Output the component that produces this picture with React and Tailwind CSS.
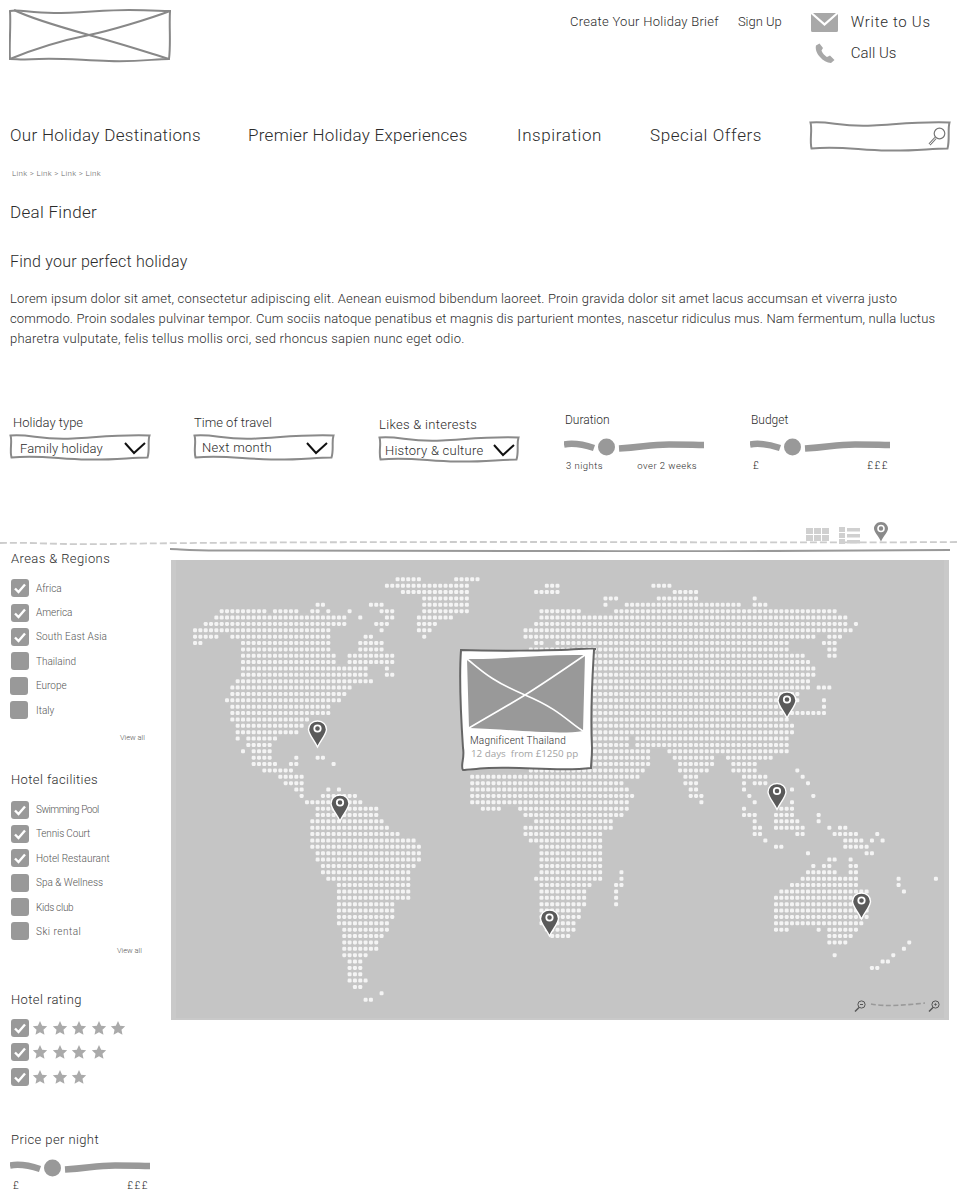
import React from "react";

const R = {
"-37":[[395,420],[453,480]],"-36":[[385,403],[410,470],[548,557],[655,668]],"-35":[[385,385],[400,470],[537,557],[675,695]],
"-34":[[421,470],[607,617],[658,695],[755,755]],"-33":[[317,325],[370,383],[421,470],[607,607],[628,637],[643,738],[755,768]],
"-32":[[222,265],[275,298],[310,320],[328,328],[348,348],[380,393],[421,467],[543,578],[617,625],[633,833]],
"-31":[[215,347],[360,360],[385,393],[417,450],[538,583],[590,848]],
"-30":[[205,345],[375,387],[417,435],[533,578],[585,848],[857,857]],
"-29":[[195,330],[380,380],[417,430],[523,547],[553,853]],
"-28":[[195,218],[232,330],[365,372],[423,423],[523,547],[553,813],[828,842]],
"-27":[[195,202],[242,330],[358,383],[533,542],[558,790],[825,837]],
"-26":[[242,330],[358,383],[530,790],[830,837]],
"-25":[[242,335],[347,393],[530,802],[830,837]],
"-24":[[242,335],[347,393],[530,810]],
"-23":[[242,367],[387,387],[530,815]],
"-22":[[242,367],[387,393],[530,815]],
"-21":[[237,372],[530,807]],
"-20":[[232,350],[530,807],[818,828]],
"-19":[[232,345],[530,797]],
"-18":[[227,340],[530,797],[825,825]],
"-17":[[232,330],[530,790],[825,825]],
"-16":[[232,330],[530,807],[813,827]],
"-15":[[232,308],[530,790]],
"-14":[[237,303],[530,623],[628,793]],
"-13":[[237,298],[530,617],[622,793]],
"-12":[[237,237],[247,277],[530,625],[638,787]],
"-11":[[247,272],[530,627],[638,790]],
"-10":[[243,243],[253,272],[530,647],[670,787],[795,795]],
"-9":[[253,272],[295,295],[317,325],[530,647],[675,715],[727,773]],
"-8":[[253,277],[290,297],[333,333],[530,647],[680,715],[733,758]],
"-7":[[263,293],[530,642],[680,705],[733,758],[798,798]],
"-6":[[277,303],[470,637],[685,698],[745,767],[803,803]],
"-5":[[285,303],[470,620],[685,698],[745,745],[755,767],[808,808]],
"-4":[[295,303],[327,327],[338,338],[470,630],[692,698],[745,745],[762,762],[793,793],[805,805]],
"-3":[[302,303],[322,355],[470,632],[692,700],[750,750],[810,813]],
"-2":[[305,328],[350,362],[473,625],[703,703],[752,757],[793,793]],
"-1":[[315,378],[480,502],[518,625],[745,745],[757,757],[782,793]],
"0":[[315,378],[527,620],[745,757],[777,793],[818,818]],
"1":[[310,383],[533,613],[752,757],[777,798],[818,818]],
"2":[[310,387],[527,610],[755,762],[777,793],[798,803],[830,830],[840,847]],
"3":[[310,398],[527,603],[755,762],[798,803],[835,857],[878,878]],
"4":[[310,413],[532,600],[767,767],[845,862],[872,872],[882,882]],
"5":[[310,420],[538,600],[777,782],[845,867]],
"6":[[315,420],[538,600],[808,808],[867,873]],
"7":[[315,418],[538,603],[830,837],[852,852]],
"8":[[322,413],[538,603],[815,815],[825,830],[852,857]],
"9":[[322,408],[538,603],[623,623],[808,837],[852,857]],
"10":[[327,408],[533,603],[618,623],[803,857],[898,898],[935,935]],
"11":[[338,408],[538,592],[613,623],[793,857],[898,898]],
"12":[[338,408],[538,587],[613,618],[782,870],[903,903]],
"13":[[338,408],[543,587],[613,618],[777,870]],
"14":[[338,392],[543,587],[613,618],[777,868]],
"15":[[338,392],[543,582],[777,868]],
"16":[[338,392],[543,582],[777,868]],
"17":[[338,387],[543,575],[777,863]],
"18":[[343,387],[548,572],[777,788],[820,820],[830,857]],
"19":[[343,382],[550,567],[830,852]],
"20":[[343,377],[830,847],[910,910]],
"21":[[343,377],[903,903]],
"22":[[343,367],[835,835],[893,893]],
"23":[[348,360],[883,888]],
"24":[[348,360],[873,877]],
"25":[[348,360]],
"26":[[348,365]],
"27":[[353,360]],
"28":[[358,358],[380,380]],
"29":[[363,370]],
};

const DOTS = [];
Object.entries(R).forEach(([k, runs]) => {
  const y = 815 + Number(k) * 6.37;
  runs.forEach(([a, b]) => {
    const j0 = Math.ceil((a - 1.8 - 312.3) / 5.33);
    const j1 = Math.floor((b + 1.8 - 312.3) / 5.33);
    for (let j = j0; j <= j1; j++) DOTS.push([312.3 + j * 5.33, y]);
  });
});

const hand = "font-['Roboto',sans-serif] font-light text-[#2b2b2b]";

function SketchBox({ w, h, className = "", children, stroke = "#8a8a8a" }) {
  const m = 1.5;
  const d = `M${m} ${m + 1} C ${w * 0.15} ${m - 1}, ${w * 0.22} ${m + 6}, ${w * 0.45} ${m + 4} S ${w * 0.8} ${m}, ${w - m} ${m + 1} C ${w - m - 2} ${h * 0.3}, ${w - 1} ${h * 0.6}, ${w - m - 2} ${h - m - 2} C ${w * 0.85} ${h - m - 2}, ${w * 0.75} ${h - 1}, ${w * 0.55} ${h - m} S ${w * 0.2} ${h - m - 5}, ${m + 1} ${h - m - 2} C ${m - 1} ${h * 0.6}, ${m + 2} ${h * 0.3}, ${m} ${m + 1} Z`;
  return (
    <div className={`relative ${className}`} style={{ width: w, height: h }}>
      <svg className="absolute inset-0" width={w} height={h} fill="none">
        <path d={d} stroke={stroke} strokeWidth="2" fill="#fff" />
      </svg>
      {children}
    </div>
  );
}

function Select({ label, value, w = 142, h = 28, labelClass = "", textClass = "", chevX = 115 }) {
  return (
    <div className="flex flex-col">
      <div className={`${hand} text-[13px] h-[20px] leading-[20px] ${labelClass}`}>{label}</div>
      <SketchBox w={w} h={h}>
        <span className={`absolute top-0 bottom-0 flex items-center ${hand} text-[13px] ${textClass}`}>{value}</span>
        <svg className="absolute top-[8px]" style={{ left: chevX }} width="22" height="14" fill="none">
          <path d="M1 2 L10 12 L21 2" stroke="#111" strokeWidth="2" />
        </svg>
      </SketchBox>
    </div>
  );
}

function Slider() {
  return (
    <svg width="140" height="22" fill="none" className="block">
      <path d="M0 8.5 C 8 7, 18 8, 30 12" stroke="#999" strokeWidth="6.5" />
      <circle cx="42.5" cy="11" r="8.5" fill="#999" />
      <path d="M55 12.5 C 80 11, 85 8.5, 105 8.5 S 130 9, 140 9" stroke="#999" strokeWidth="6.5" />
    </svg>
  );
}

function Check({ checked, shift }) {
  return (
    <span className={`w-[18px] h-[18px] rounded-[3px] bg-[#999] flex items-center justify-center shrink-0 ${shift ? "-ml-px mr-px" : ""}`}>
      {checked && (
        <svg width="14" height="12" fill="none" viewBox="0 0 14 12">
          <path d="M2 6.5 L5.5 10 L12 2.5" stroke="#fff" strokeWidth="2.4" />
        </svg>
      )}
    </span>
  );
}

function CheckRow({ label, checked, shift, labelClass = "" }) {
  return (
    <div className="h-[24.4px] flex items-center pl-[11px]">
      <Check checked={checked} shift={shift} />
      <span className={`ml-[7px] ${hand} text-[10px] text-[#555] ${labelClass}`}>{label}</span>
    </div>
  );
}

function Star() {
  return (
    <svg width="16" height="16" viewBox="0 0 24 24" className="shrink-0">
      <path d="M12 1.5 l3.2 7 7.6 .9 -5.6 5.2 1.5 7.6 -6.7 -3.8 -6.7 3.8 1.5 -7.6 L1.2 9.4 l7.6 -.9 Z" fill="#aaa" />
    </svg>
  );
}

function StarRow({ n }) {
  return (
    <div className="h-[24.5px] flex items-center pl-[11px]">
      <Check checked />
      <div className="flex ml-[3px] gap-[3.5px]">
        {Array.from({ length: n }).map((_, i) => <Star key={i} />)}
      </div>
    </div>
  );
}

function Title({ children, className = "" }) {
  return <div className={`${hand} text-[13px] h-[20px] leading-[20px] pl-[11px] tracking-[0.4px] ${className}`}>{children}</div>;
}

function Pin({ x, y }) {
  const px = x - 171;
  const py = y - 560;
  return (
    <g transform={`translate(${px - 10} ${py})`}>
      <path d="M10 1 C 4.5 1, 1 5, 1 9.5 C 1 14, 6.5 20, 10 27 C 13.5 20, 19 14, 19 9.5 C 19 5, 15.5 1, 10 1 Z" fill="#5a5a5a" stroke="#fff" strokeWidth="1.4" />
      <circle cx="10" cy="8.5" r="3.2" fill="#5a5a5a" stroke="#fff" strokeWidth="1.8" />
    </g>
  );
}

function Mag({ x, y, minus, dot }) {
  return (
    <g transform={`translate(${x} ${y})`} fill="none" stroke="#555">
      <circle cx="7.5" cy="4.5" r="3.6" strokeWidth="1" />
      <path d="M5 7.5 L1 11.5" strokeWidth="1.5" />
      {minus && <path d="M6 4.5 H9" strokeWidth="1" />}
      {dot && <circle cx="7.5" cy="4.5" r="0.7" fill="#555" />}
    </g>
  );
}

export default function App() {
  return (
    <div className="w-[960px] h-[1203px] bg-white overflow-hidden">
      {/* top bar */}
      <header className="h-[112px] flex items-start">
        <svg width="163" height="54" className="mt-[9px] ml-[9px] shrink-0" fill="none" stroke="#888" strokeWidth="2">
          <path d="M1 2 C 10 0, 20 4, 45 4 S 95 1, 120 1 S 150 2, 161 2 C 160 18, 162 34, 160 50 C 145 50, 130 53, 100 52 S 50 49, 30 50 S 10 50, 1 50 C 0 35, 2 18, 1 2 Z" />
          <path d="M5 1 C 15 6, 30 12, 80 26 S 140 44, 160 50" />
          <path d="M1 50 C 30 38, 60 30, 80 26 S 140 10, 161 2" />
        </svg>
        <div className="ml-[398px] mt-[13px] flex items-center h-[18px]">
          <span className={`${hand} text-[13px] tracking-[0.28px]`}>Create Your Holiday Brief</span>
          <span className={`${hand} text-[13px] ml-[19px]`}>Sign Up</span>
        </div>
        <div className="ml-[29px] mt-[13px] flex flex-col">
          <div className="flex items-center h-[19px]">
            <svg width="27" height="19" viewBox="0 0 27 19" className="shrink-0">
              <path d="M0 1 L13.5 13 L27 1 V17.5 Q27 19 25.5 19 H1.5 Q0 19 0 17.5 Z" fill="#a8a8a8" />
              <path d="M2 0 H25 L13.5 10 Z" fill="#a8a8a8" />
            </svg>
            <span className={`${hand} text-[15px] ml-[13px] tracking-[0.7px]`}>Write to Us</span>
          </div>
          <div className="flex items-center h-[20px] mt-[11px]">
            <svg width="20" height="20" viewBox="0 0 20 20" className="ml-[4px] shrink-0">
              <path d="M4.5 0.5 L1 2.5 C 0 6, 2 11, 5 14 C 8 17.5, 12 20, 16 20 L19.5 17 L15 12.5 L12 14 C 10 13, 7 9.5, 6.5 7.5 L8 5 Z" fill="#a8a8a8" />
            </svg>
            <span className={`${hand} text-[15px] ml-[16px]`}>Call Us</span>
          </div>
        </div>
      </header>

      {/* nav */}
      <nav className="mt-[8px] h-[32px] flex items-center pl-[10px]">
        <span className={`${hand} text-[17px] w-[238px] tracking-[0.3px]`}>Our Holiday Destinations</span>
        <span className={`${hand} text-[17px] w-[269px] tracking-[0.27px]`}>Premier Holiday Experiences</span>
        <span className={`${hand} text-[17px] w-[133px] tracking-[0.6px]`}>Inspiration</span>
        <span className={`${hand} text-[17px] w-[159px] tracking-[0.6px]`}>Special Offers</span>
        <SketchBox w={142} h={32}>
          <svg className="absolute left-[119px] top-[7px]" width="18" height="19" viewBox="0 0 18 19" fill="none" stroke="#777">
            <circle cx="11.5" cy="6.5" r="5.3" strokeWidth="1.2" />
            <path d="M7.5 11 L1.5 17.5" strokeWidth="2.6" />
            <path d="M7.5 11 L1.5 17.5" strokeWidth="1" stroke="#fff" />
          </svg>
        </SketchBox>
      </nav>

      {/* breadcrumb */}
      <div className="mt-[17px] h-[10px] leading-[10px] pl-[12px] font-['Roboto',sans-serif] font-light text-[8px] text-[#666] tracking-[0.3px]">
        Link &gt; Link &gt; Link &gt; Link
      </div>

      <h1 className={`mt-[21px] h-[24px] leading-[24px] pl-[10px] ${hand} text-[17px] tracking-[0.3px]`}>Deal Finder</h1>
      <h2 className={`mt-[26px] h-[24px] leading-[24px] pl-[10px] ${hand} text-[16px] tracking-[0.22px]`}>Find your perfect holiday</h2>

      <p className={`mt-[15px] pl-[10px] ${hand} text-[13px] leading-[20px] whitespace-nowrap`}>
        <span className="block tracking-[0.18px]">Lorem ipsum dolor sit amet, consectetur adipiscing elit. Aenean euismod bibendum laoreet. Proin gravida dolor sit amet lacus accumsan et viverra justo</span>
        <span className="block tracking-[0.14px]">commodo. Proin sodales pulvinar tempor. Cum sociis natoque penatibus et magnis dis parturient montes, nascetur ridiculus mus. Nam fermentum, nulla luctus</span>
        <span className="block tracking-[0.25px]">pharetra vulputate, felis tellus mollis orci, sed rhoncus sapien nunc eget odio.</span>
      </p>

      {/* filters */}
      <section className="mt-[63px] h-[108px] flex items-start">
        <div className="ml-[9px] mt-[1px]">
          <Select label="Holiday type" value="Family holiday" labelClass="pl-[4px]" textClass="left-[11px] pt-[3px] tracking-[0.1px]" />
        </div>
        <div className="ml-[42px] mt-[1px]">
          <Select label="Time of travel" value="Next month" labelClass="pl-[1px]" textClass="left-[9px] pt-[2px] tracking-[0.3px]" chevX={113} />
        </div>
        <div className="ml-[43px] mt-[3px]">
          <Select label="Likes & interests" value="History & culture" labelClass="pl-[1px] tracking-[0.3px]" textClass="left-[7px] pt-[3px] tracking-[0.25px]" chevX={115} />
        </div>
        <div className="ml-[44px] w-[140px] flex flex-col">
          <div className={`${hand} text-[12px] h-[16px] leading-[16px] pl-[1px]`}>Duration</div>
          <div className="mt-[8px]"><Slider /></div>
          <div className={`${hand} mt-[1px] text-[9.5px] h-[14px] leading-[14px] flex justify-between pl-[2px] pr-[7px] tracking-[0.45px]`}>
            <span>3 nights</span><span>over 2 weeks</span>
          </div>
        </div>
        <div className="ml-[46px] w-[140px] flex flex-col">
          <div className={`${hand} text-[12px] h-[16px] leading-[16px] pl-[1px]`}>Budget</div>
          <div className="mt-[8px]"><Slider /></div>
          <div className={`${hand} mt-[1px] text-[10px] h-[14px] leading-[14px] flex justify-between pl-[3px] pr-[1px] tracking-[1.5px]`}>
            <span>£</span><span>£££</span>
          </div>
        </div>
      </section>

      {/* divider with view switch */}
      <div className="h-[27px] relative">
        <svg className="absolute left-0 top-0" width="960" height="27" fill="none">
          <path d="M0 23 C 30 22, 60 25, 110 24 S 300 22, 500 22 S 800 23, 958 22" stroke="#ccc" strokeWidth="1.8" strokeDasharray="7 3" />
          <g fill="#d0d0d0" stroke="none">
            {[806, 814, 822].map((x) => [8, 15].map((y) => <rect key={`${x}-${y}`} x={x} y={y} width="7" height="6" />))}
            {[8, 14, 20].map((y) => <g key={y}><rect x="839" y={y - 1} width="6" height="5" /><rect x="847" y={y} width="13" height="3.5" /></g>)}
          </g>
          <path d="M881 2 C 876.5 2, 874 5.5, 874 8.5 C 874 12, 878 15, 881 21.5 C 884 15, 888 12, 888 8.5 C 888 5.5, 885.5 2, 881 2 Z" fill="#8a8a8a" />
          <circle cx="881" cy="8.5" r="3" fill="#8a8a8a" stroke="#fff" strokeWidth="1.6" />
        </svg>
      </div>

      {/* main */}
      <div className="flex items-start">
        <aside className="w-[171px] shrink-0 pt-[2px]">
          <Title>Areas &amp; Regions</Title>
          <div className="mt-[7px]">
            <CheckRow label="Africa" checked />
            <CheckRow label="America" checked />
            <CheckRow label="South East Asia" checked labelClass="tracking-[0.15px]" />
            <CheckRow label="Thailaind" />
            <CheckRow label="Europe" shift />
            <CheckRow label="Italy" shift />
          </div>
          <div className={`mt-[11px] h-[10px] leading-[10px] text-right pr-[26px] ${hand} text-[7.5px] text-[#555]`}>View all</div>

          <Title className="mt-[27px]">Hotel facilities</Title>
          <div className="mt-[7px]">
            <CheckRow label="Swimming Pool" checked labelClass="-tracking-[0.45px]" />
            <CheckRow label="Tennis Court" checked labelClass="-tracking-[0.15px]" />
            <CheckRow label="Hotel Restaurant" checked />
            <CheckRow label="Spa & Wellness" />
            <CheckRow label="Kids club" labelClass="-tracking-[0.3px]" />
            <CheckRow label="Ski rental" labelClass="tracking-[0.5px]" />
          </div>
          <div className={`mt-[2px] h-[10px] leading-[10px] text-right pr-[29px] ${hand} text-[7.5px] text-[#555]`}>View all</div>

          <Title className="mt-[34px]">Hotel rating</Title>
          <div className="mt-[6px]">
            <StarRow n={5} />
            <StarRow n={4} />
            <StarRow n={3} />
          </div>

          <Title className="mt-[41px]">Price per night</Title>
          <div className="mt-[7px] pl-[10px]"><Slider /></div>
          <div className={`${hand} mt-[1px] text-[10px] h-[12px] leading-[12px] w-[150px] flex justify-between pl-[13px] pr-[1px] tracking-[1.5px]`}>
            <span>£</span><span>£££</span>
          </div>
        </aside>

        <div className="w-[780px] shrink-0">
          <svg width="780" height="5" fill="none" className="block -ml-px">
            <path d="M0 2 C 10 2, 20 4, 60 3.5 S 200 3, 400 4 S 700 3, 780 3" stroke="#999" strokeWidth="2" />
          </svg>
          <div className="relative mt-[8px] w-[778px] h-[460px] bg-[#c5c5c5] border-l-[5px] border-r-[5px] border-b-[2px] border-[#c9c9c9] box-border">
            <svg className="absolute left-[-5px] top-0" width="778" height="460" fill="none">
              {DOTS.map(([x, y], i) => (
                <rect key={i} x={x - 171 - 2} y={y - 560 - 2} width="4" height="4" rx="1.3" fill="#f4f4f4" />
              ))}
              <Pin x={317.5} y={720} />
              <Pin x={340} y={794} />
              <Pin x={549.5} y={909} />
              <Pin x={787} y={691} />
              <Pin x={777} y={782.5} />
              <Pin x={861.5} y={892} />
              <Mag x={683} y={440} minus />
              <path d="M700 444 C 715 447, 735 445, 754 443" stroke="#999" strokeWidth="1.6" strokeDasharray="5 2.5" />
              <Mag x={757} y={440} dot />
            </svg>

            {/* tooltip card */}
            <div className="absolute left-[283px] top-[88px] w-[137px] h-[125px]">
              <svg className="absolute inset-0" width="137" height="125" fill="none">
                <path d="M2 2 C 30 3, 90 3, 120 1 S 134 1, 135 2 C 134 20, 131 60, 133 100 C 133 110, 132 116, 132 120 C 100 124, 60 118, 30 120 S 8 122, 4 122 C 1 118, 6 110, 4 100 C 2 70, 0 30, 2 2 Z" fill="#fff" stroke="#666" strokeWidth="2" />
                <path d="M8 11 C 40 12, 80 6, 126 7 L 124 83 C 100 87, 60 82, 10 80 Z" fill="#999" />
                <path d="M8 11 C 20 20, 30 32, 66 47 S 110 75, 124 83" stroke="#fff" strokeWidth="1.6" />
                <path d="M10 80 C 30 68, 50 57, 66 47 S 110 18, 126 7" stroke="#fff" strokeWidth="1.6" />
              </svg>
              <div className={`absolute left-[11px] top-[86px] ${hand} text-[10px] leading-[14px] tracking-[0.2px] whitespace-nowrap`}>Magnificent Thailand</div>
              <div className="absolute left-[12px] top-[99px] font-['Open_Sans',sans-serif] text-[9.8px] leading-[14px] text-[#a3a3a3] whitespace-pre">12 days  from £1250 pp</div>
            </div>
          </div>
        </div>
      </div>
    </div>
  );
}
